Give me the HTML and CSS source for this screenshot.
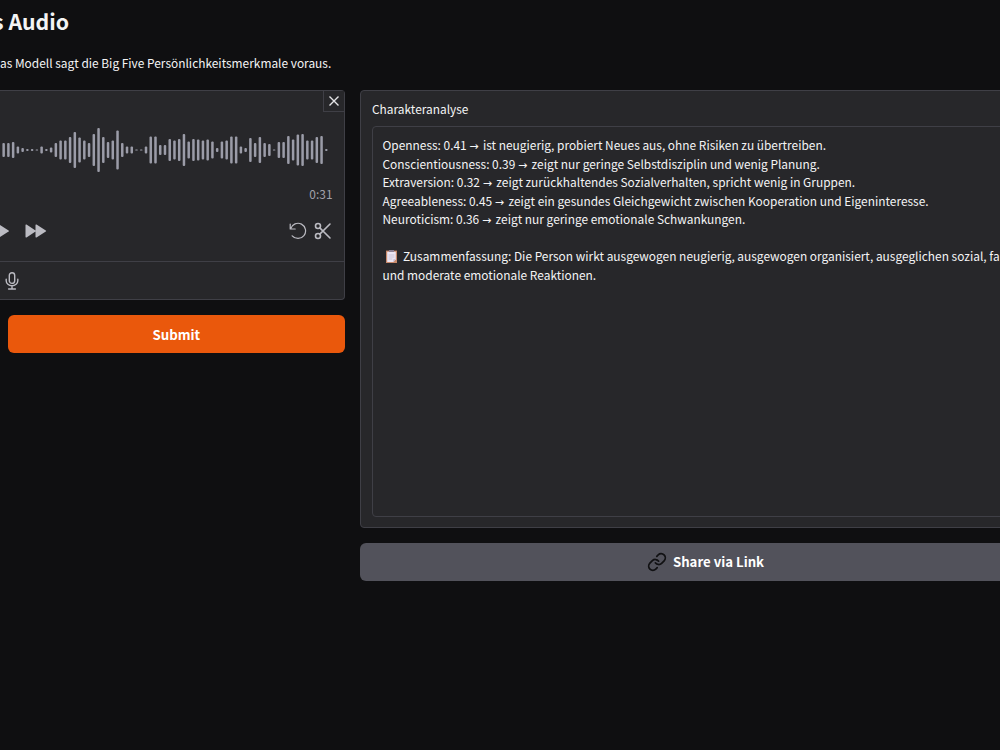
FILE: index.html
```html
<!DOCTYPE html>
<html lang="de">
<head>
  <meta charset="UTF-8" />
  <meta name="viewport" content="width=device-width, initial-scale=1.0"/>
  <title>Charakteranalyse</title>
  <link rel="stylesheet" href="styles.css">
</head>
<body>
  <h1>s Audio</h1>
  <p class="description">as Modell sagt die Big Five Persönlichkeitsmerkmale voraus.</p>

  <main class="row">
    <section class="input-col">
      <div class="audio-panel">
        <button class="clear-btn" aria-label="Clear">
          <svg width="12" height="12" viewBox="0 0 12 12"><path d="M1.5 1.5l9 9M10.5 1.5l-9 9"/></svg>
        </button>
        <svg class="waveform" id="waveform" width="344" height="50"></svg>
        <div class="time">0:31</div>
        <div class="controls">
          <svg class="play" width="10" height="14" viewBox="0 0 10 14"><path d="M0 1l8.6 5.4q.8.6 0 1.2L0 13z"/></svg>
          <svg class="forward" width="22" height="14" viewBox="0 0 22 14"><path d="M.5 1.2q0-1.2 1-.6l9 5.8V1.2q0-1.2 1-.6l9.3 5.8q.9.6 0 1.2l-9.3 5.8q-1 .6-1-.6V7.6l-9 5.8q-1 .6-1-.6z"/></svg>
          <svg class="undo" width="18" height="18" viewBox="0 0 18 18"><path d="M1.2 2v5h5M1.7 6.7A7.6 7.6 0 1 1 3.2 13.8"/></svg>
          <svg class="trim" width="18" height="18" viewBox="0 0 18 18"><circle cx="4" cy="4" r="2.5"/><circle cx="4" cy="14" r="2.5"/><path d="M5.8 5.9L16 16M5.8 12.1L16 2"/></svg>
        </div>
        <div class="sources">
          <svg width="14" height="18" viewBox="0 0 14 18"><rect x="4.3" y=".8" width="5.4" height="10.6" rx="2.7"/><path d="M1.2 7.2v1.5a5.8 5 0 0 0 11.6 0V7.2M7 13.8v3M3.6 17h6.8"/></svg>
        </div>
      </div>
      <button class="submit">Submit</button>
    </section>

    <section class="output-col">
      <div class="result-panel">
        <label>Charakteranalyse</label>
        <div class="result">
          <div>Openness: 0.41 <i>→</i> ist neugierig, probiert Neues aus, ohne Risiken zu übertreiben.</div>
          <div>Conscientiousness: 0.39 <i>→</i> zeigt nur geringe Selbstdisziplin und wenig Planung.</div>
          <div>Extraversion: 0.32 <i>→</i> zeigt zurückhaltendes Sozialverhalten, spricht wenig in Gruppen.</div>
          <div>Agreeableness: 0.45 <i>→</i> zeigt ein gesundes Gleichgewicht zwischen Kooperation und Eigeninteresse.</div>
          <div>Neuroticism: 0.36 <i>→</i> zeigt nur geringe emotionale Schwankungen.</div>
          <div class="summary"><svg class="clipboard" width="11" height="13" viewBox="0 0 11 13"><path fill="#c98a6c" d="M0 .6h11V13H0z"/><path fill="#ece6f4" d="M1.2 1.8h8.6v7.5l-2.4 2.6H1.2z"/><path fill="#8d8295" d="M3 0h5v2H3z"/><path stroke="#bdb5cb" stroke-width=".7" d="M3 5h5M3 7h5M3 9h3"/><path fill="#c3b9cf" d="M7.4 9.3h2.4l-2.4 2.6z"/></svg>Zusammenfassung: Die Person wirkt ausgewogen neugierig, ausgewogen organisiert, ausgeglichen sozial, fa</div>
          <div>und moderate emotionale Reaktionen.</div>
        </div>
      </div>
      <button class="share">
        <svg width="20" height="20" viewBox="0 0 24 24"><path d="M10 13a5 5 0 0 0 7.54.54l3-3a5 5 0 0 0-7.07-7.07l-1.72 1.71"/><path d="M14 11a5 5 0 0 0-7.54-.54l-3 3a5 5 0 0 0 7.07 7.07l1.71-1.71"/></svg>
        Share via Link
      </button>
    </section>
  </main>

  <script>
    // Draw the waveform, one rounded bar per sample
    const peaks = [
      14, 14, 16, 7, 4, 2, 2, 1, 7, 2, 5, 14, 19, 19, 26, 36, 25, 19, 14, 32, 44, 26, 16, 19, 39,
      14, 7, 7, 1, 1, 7, 27, 27, 10, 10, 22, 19, 22, 32, 17, 22, 21, 19, 21, 17, 4, 17, 19, 27, 27,
      7, 4, 24, 14, 26, 14, 12, 1, 16, 16, 28, 21, 31, 32, 19, 19, 26, 28, 2
    ];
    const waveform = document.getElementById("waveform");
    peaks.forEach((h, i) => {
      const bar = document.createElementNS("http://www.w3.org/2000/svg", "rect");
      bar.setAttribute("x", 2.4 + i * 4.745);
      bar.setAttribute("y", 25 - h / 2);
      bar.setAttribute("width", 2.5);
      bar.setAttribute("height", h);
      bar.setAttribute("rx", Math.min(1, h / 2));
      waveform.appendChild(bar);
    });
  </script>
</body>
</html>
```
FILE: styles.css
```css
:root {
  --bg: #0f0f11;
  --panel: #27272a;
  --border: #3f3f46;
  --icon: #bbbbc2;
  --text: #f4f4f5;
}

* {
  margin: 0;
  padding: 0;
  box-sizing: border-box;
}

body {
  height: 750px;
  overflow: hidden;
  background: var(--bg);
  color: var(--text);
  font-family: "Noto Sans CJK SC", "Noto Sans", sans-serif;
  font-size: 11.91px;
  line-height: 18.55px;
}

svg {
  display: block;
  fill: none;
  stroke: var(--icon);
  stroke-width: 1.4;
  stroke-linecap: round;
  stroke-linejoin: round;
}

button {
  border: none;
  font-family: inherit;
  cursor: pointer;
}

h1 {
  height: 28px;
  margin: 7px 0 0 -7px;
  font-size: 21.3px;
  line-height: 28px;
}

.description {
  margin-top: 19px;
  height: 19px;
  white-space: nowrap;
}

.row {
  display: flex;
  gap: 15px;
  width: 1051px;
  margin-top: 17px;
}

.input-col {
  width: 345px;
}

.audio-panel {
  height: 210px;
  background: var(--panel);
  border: 1px solid var(--border);
  border-left: none;
  border-radius: 0 4px 4px 0;
}

.clear-btn {
  display: flex;
  align-items: center;
  justify-content: center;
  width: 21px;
  height: 21px;
  margin-left: auto;
  background: var(--panel);
  border-left: 1px solid var(--border);
  border-bottom: 1px solid var(--border);
}

.clear-btn svg {
  stroke: #e4e4e7;
  stroke-linecap: butt;
}

.waveform {
  margin-top: 13px;
  fill: #9b9ca8;
  stroke: none;
}

.time {
  margin-top: 10px;
  padding-right: 11.5px;
  text-align: right;
  color: #a1a1aa;
}

.controls {
  display: flex;
  align-items: center;
  height: 18px;
  margin-top: 18px;
  padding-right: 12px;
}

.play,
.forward {
  fill: var(--icon);
  stroke: none;
}

.forward {
  margin-left: 15px;
}

.undo {
  margin-left: auto;
  stroke-width: 1.2;
}

.trim {
  margin-left: 7px;
  stroke-width: 1.6;
}

.sources {
  margin-top: 21px;
  padding: 10px 5px;
  border-top: 1px solid var(--border);
}

.submit {
  display: block;
  width: 337.4px;
  height: 38px;
  margin: 15px 0 0 7.6px;
  border-radius: 6px;
  background: #ea580c;
  color: #fff;
  font-size: 13.3px;
  font-weight: bold;
}

.output-col {
  width: 691px;
}

.result-panel {
  height: 437.6px;
  padding: 9px 11px;
  background: var(--panel);
  border: 1px solid var(--border);
  border-radius: 4px;
}

.result-panel label {
  display: block;
}

.result {
  height: 391px;
  margin-top: 7px;
  padding: 9.6px 9.5px;
  border: 1px solid var(--border);
  border-radius: 4px;
  white-space: nowrap;
}

.result i {
  display: inline-block;
  width: 11px;
  font-family: "Open Sans", "DejaVu Sans", sans-serif;
  font-size: 11px;
  font-style: normal;
  line-height: 1;
}

.summary {
  display: flex;
  align-items: center;
  margin-top: 18.55px;
}

.clipboard {
  margin: 0 6px 0 3.5px;
  stroke: none;
}

.share {
  display: flex;
  align-items: center;
  justify-content: center;
  gap: 6px;
  width: 100%;
  height: 38px;
  margin-top: 15px;
  border-radius: 6px;
  background: #52525b;
  color: #fff;
  font-size: 13.2px;
  font-weight: bold;
}

.share svg {
  stroke: #111113;
  stroke-width: 2.1;
}
```
